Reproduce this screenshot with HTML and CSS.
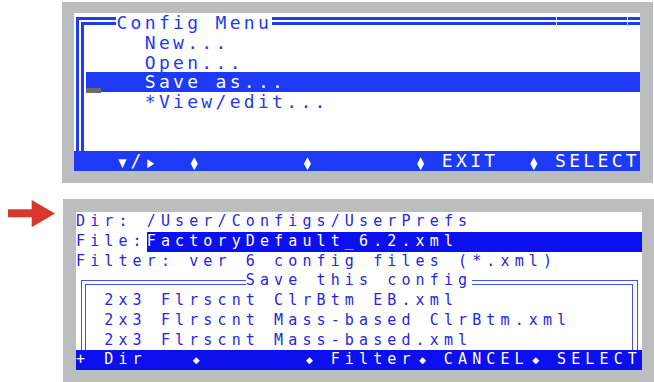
FILE: index.html
```html
<!DOCTYPE html>
<html lang="en">
<head>
    <meta charset="UTF-8">
    <title>Config Menu</title>
    <link rel="stylesheet" href="styles.css">
</head>
<body>
    <div class="page">
        <div class="lcd lcd-top">
            <div class="screen menu">
                <div class="frame"></div>
                <div class="title">Config Menu</div>
                <div class="tick tick-a"></div>
                <div class="tick tick-b"></div>
                <div class="item r2">New...</div>
                <div class="item r3">Open...</div>
                <div class="hl">Save as...</div>
                <div class="cursor"></div>
                <div class="item r5">*View/edit...</div>
                <div class="bar">   <span class="tri-down"></span>/<span class="tri-right"></span>  <span class="dia"></span>       <span class="dia"></span>       <span class="dia"></span> EXIT  <span class="dia"></span> SELECT</div>
            </div>
        </div>

        <div class="second">
            <svg class="arrow" viewBox="0 0 63 30">
                <rect x="8" y="10.3" width="25" height="8" fill="#d8372d"/>
                <polygon points="31.7,1 55,14.5 31.7,28.3" fill="#d8372d"/>
            </svg>
            <div class="lcd lcd-bottom">
                <div class="screen files">
                    <div class="r1">Dir: /User/Configs/UserPrefs</div>
                    <div class="r2 fileline">File:<span class="hl2">FactoryDefault_6.2.xml</span></div>
                    <div class="r3">Filter: ver 6 config files (*.xml)</div>
                    <div class="frame2"><div class="frame2-inner"></div></div>
                    <div class="legend">Save this config</div>
                    <div class="entry r5">2x3 Flrscnt ClrBtm EB.xml</div>
                    <div class="entry r6">2x3 Flrscnt Mass-based ClrBtm.xml</div>
                    <div class="entry r7">2x3 Flrscnt Mass-based.xml</div>
                    <div class="bar2">+ Dir   <span class="dia-s"></span>       <span class="dia-s"></span> Filter<span class="dia-s"></span> CANCEL<span class="dia-s"></span> SELECT</div>
                </div>
            </div>
        </div>
    </div>
</body>
</html>
```

FILE: styles.css
```css
body {
    margin: 0;
    background-color: #fff;
}

.page {
    padding-top: 2px;
}

.lcd {
    background-color: #bcbdbf;
    width: 566px;
}

.lcd-top {
    margin-left: 62px;
    padding: 11px 13px 12px 12px;
}

.second {
    display: flex;
    margin-top: 16px;
}

.arrow {
    flex: none;
    width: 63px;
    height: 30px;
}

.lcd-bottom {
    padding: 13px 12px 12px 13px;
}

/* 40 x 8 character display */
.screen {
    --col: 14.15px;
    background-color: #fff;
    width: 566px;
    height: 158px;
    display: grid;
    grid-template-columns: 566px;
    grid-template-rows: repeat(8, 1fr);
    font-family: "DejaVu Sans Mono", monospace;
    line-height: 19.75px;
    white-space: pre;
    overflow: hidden;
}

.screen > * {
    grid-column: 1;
}

.r1 { grid-row: 1; }
.r2 { grid-row: 2; }
.r3 { grid-row: 3; }
.r5 { grid-row: 5; }
.r6 { grid-row: 6; }
.r7 { grid-row: 7; }

/* top screen */
.menu {
    font-size: 18px;
    letter-spacing: calc(var(--col) - 0.6021em);
    color: #1e3af5;
}

.frame {
    grid-row: 1 / 8;
    margin: 4px 0 0 2px;
    border-top: 8px double #1e3af5;
    border-left: 8px double #1e3af5;
}

.title {
    grid-row: 1;
    justify-self: start;
    margin-left: calc(var(--col) * 3);
    background-color: #fff;
}

.tick {
    grid-row: 1;
    justify-self: start;
    align-self: start;
    width: 1px;
    height: 10px;
    margin-top: 3px;
    background-color: #e8ebff;
}

.tick-a { margin-left: 482px; }
.tick-b { margin-left: 553px; }

.item {
    padding-left: calc(var(--col) * 5);
}

.hl {
    grid-row: 4;
    margin-left: calc(var(--col) - 2px);
    padding-left: calc(var(--col) * 4 + 2px);
    background-color: #1e3af5;
    color: #fff;
}

.cursor {
    grid-row: 4;
    justify-self: start;
    align-self: end;
    width: 15px;
    height: 5px;
    margin: 0 0 -1px 12px;
    background-color: #6b6b6b;
}

.bar {
    grid-row: 8;
    background-color: #1e3af5;
    color: #fff;
}

.dia, .tri-down, .tri-right, .dia-s {
    display: inline-block;
    width: var(--col);
    background-color: #fff;
}

.dia {
    height: 13px;
    vertical-align: -3px;
    clip-path: polygon(50% 0, 75% 50%, 50% 100%, 25% 50%);
}

.tri-down {
    height: 9px;
    vertical-align: -1px;
    clip-path: polygon(13% 0, 72% 0, 43% 100%);
}

.tri-right {
    height: 9px;
    vertical-align: -1px;
    clip-path: polygon(18% 0, 67% 50%, 18% 100%);
}

/* bottom screen */
.files {
    font-size: 15px;
    letter-spacing: calc(var(--col) - 0.6021em);
    color: #1e28e6;
}

.fileline {
    display: flex;
}

.hl2 {
    flex: 1;
    background-color: #0c10ee;
    color: #fff;
}

.frame2 {
    grid-row: 4 / 8;
    display: flex;
    margin: 8.5px 3.7px 0 5px;
    padding: 3.6px 4.3px 0 2.5px;
    border: 1px solid #4453f0;
    border-bottom: 0;
}

.frame2-inner {
    flex: 1;
    border: 1px solid #4453f0;
    border-bottom: 0;
}

.legend {
    grid-row: 4;
    justify-self: start;
    margin-left: calc(var(--col) * 12);
    background-color: #fff;
}

.entry {
    padding-left: calc(var(--col) * 2);
}

.bar2 {
    grid-row: 8;
    background-color: #0c10ee;
    color: #fff;
}

.dia-s {
    height: 7px;
    vertical-align: 0;
    clip-path: polygon(50% 0, 75% 50%, 50% 100%, 25% 50%);
}
```
